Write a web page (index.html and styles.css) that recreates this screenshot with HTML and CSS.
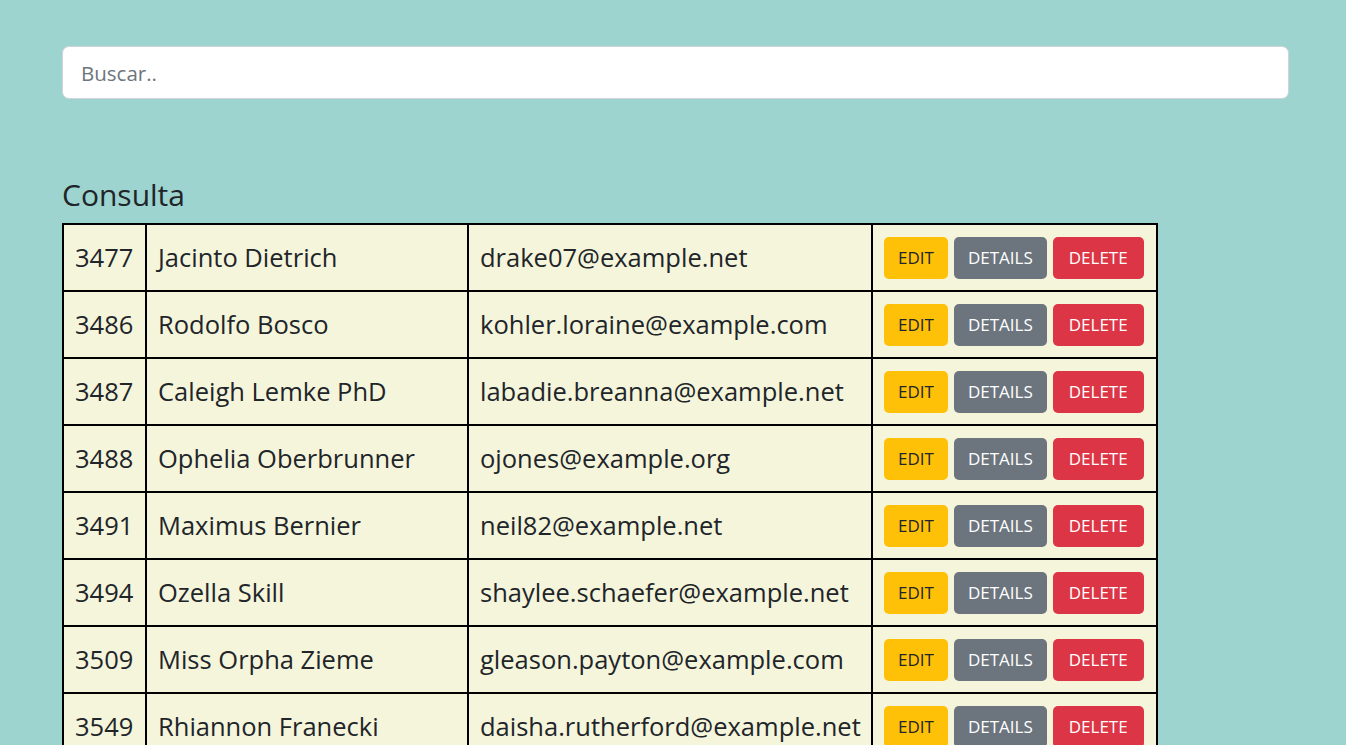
FILE: index.html
```html
<!DOCTYPE html>
<html lang="es">
<head>
<meta charset="utf-8">
<title>Consulta</title>
<link rel="stylesheet" href="styles.css">
</head>
<body>
<main class="page">
  <input class="search" type="text" placeholder="Buscar..">
  <h2 class="title">Consulta</h2>
  <table class="grid">
    <colgroup>
      <col class="c-id"><col class="c-name"><col class="c-mail"><col class="c-act">
    </colgroup>
    <tbody>
      <tr><td>3477</td><td>Jacinto Dietrich</td><td>drake07@example.net</td><td class="acts"><button class="btn edit">EDIT</button><button class="btn details">DETAILS</button><button class="btn delete">DELETE</button></td></tr>
      <tr><td>3486</td><td>Rodolfo Bosco</td><td>kohler.loraine@example.com</td><td class="acts"><button class="btn edit">EDIT</button><button class="btn details">DETAILS</button><button class="btn delete">DELETE</button></td></tr>
      <tr><td>3487</td><td>Caleigh Lemke PhD</td><td>labadie.breanna@example.net</td><td class="acts"><button class="btn edit">EDIT</button><button class="btn details">DETAILS</button><button class="btn delete">DELETE</button></td></tr>
      <tr><td>3488</td><td>Ophelia Oberbrunner</td><td>ojones@example.org</td><td class="acts"><button class="btn edit">EDIT</button><button class="btn details">DETAILS</button><button class="btn delete">DELETE</button></td></tr>
      <tr><td>3491</td><td>Maximus Bernier</td><td>neil82@example.net</td><td class="acts"><button class="btn edit">EDIT</button><button class="btn details">DETAILS</button><button class="btn delete">DELETE</button></td></tr>
      <tr><td>3494</td><td>Ozella Skill</td><td>shaylee.schaefer@example.net</td><td class="acts"><button class="btn edit">EDIT</button><button class="btn details">DETAILS</button><button class="btn delete">DELETE</button></td></tr>
      <tr><td>3509</td><td>Miss Orpha Zieme</td><td>gleason.payton@example.com</td><td class="acts"><button class="btn edit">EDIT</button><button class="btn details">DETAILS</button><button class="btn delete">DELETE</button></td></tr>
      <tr><td>3549</td><td>Rhiannon Franecki</td><td>daisha.rutherford@example.net</td><td class="acts"><button class="btn edit">EDIT</button><button class="btn details">DETAILS</button><button class="btn delete">DELETE</button></td></tr>
    </tbody>
  </table>
</main>
</body>
</html>
```
FILE: styles.css
```css
html, body {
  margin: 0;
  padding: 0;
  background: #9dd4cf;
  font-family: "Open Sans", "Noto Sans", sans-serif;
  color: #212529;
}
.page {
  padding: 46px 57px 40px 62px;
}
.search {
  display: block;
  box-sizing: border-box;
  width: 100%;
  height: 53px;
  padding: 0 18px;
  border: 1px solid #ced4da;
  border-radius: 7px;
  background: #fff;
  font-family: inherit;
  font-size: 20.5px;
  color: #495057;
  outline: none;
}
.search::placeholder {
  color: #6c757d;
}
.title {
  margin: 78px 0 10px;
  font-size: 30px;
  font-weight: 400;
  line-height: 36px;
  color: #212529;
}
.grid {
  border-collapse: collapse;
  table-layout: fixed;
  width: 1094px;
  background: #f5f5dc;
}
.c-id { width: 83px; }
.c-name { width: 322px; }
.c-mail { width: 404px; }
.c-act { width: 285px; }
.grid td {
  border: 2px solid #000;
  height: 67px;
  box-sizing: border-box;
  padding: 0 11px;
  font-size: 25.5px;
  line-height: 1.3;
  white-space: nowrap;
  vertical-align: middle;
}
.acts {
  font-size: 0;
}
.grid td.acts {
  padding: 0 11px;
}
.btn {
  height: 42px;
  border: none;
  border-radius: 5px;
  padding: 0 14px;
  margin-right: 6px;
  font-family: inherit;
  font-size: 17px;
  vertical-align: middle;
}
.btn:last-child { margin-right: 0; }
.edit { background: #ffc107; color: #212529; }
.details { background: #6c757d; color: #fff; }
.delete { background: #dc3545; color: #fff; padding: 0 16px; }
```
